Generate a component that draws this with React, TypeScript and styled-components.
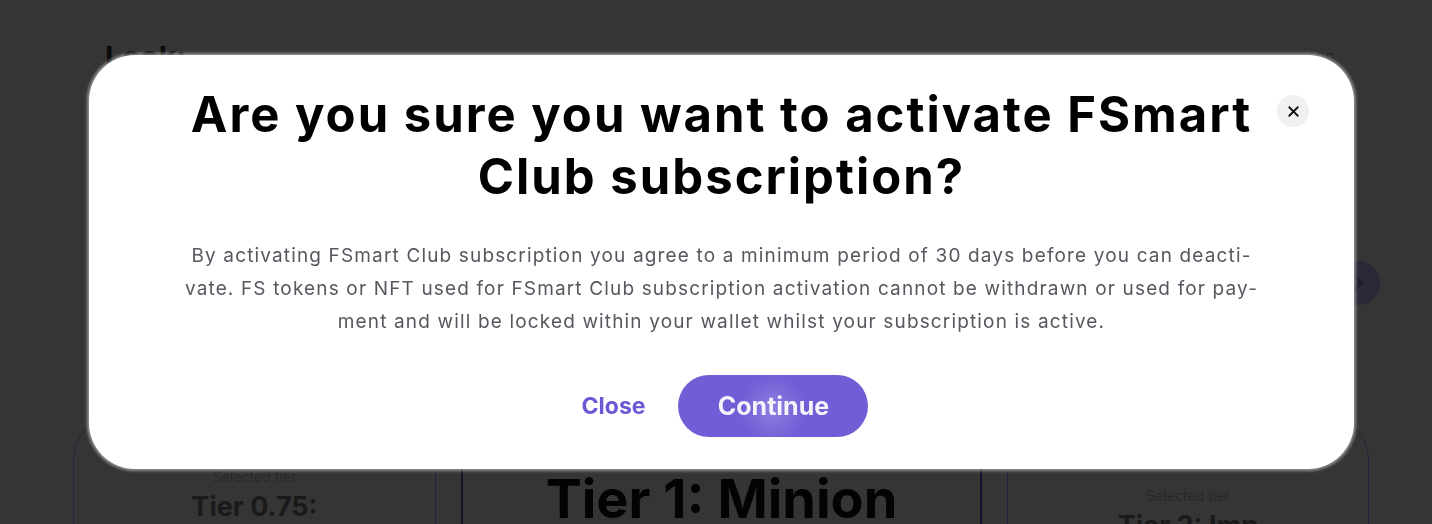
import * as React from 'react';
import styled, { createGlobalStyle } from 'styled-components';
import { X, ChevronRight } from 'lucide-react';

const GlobalStyle = createGlobalStyle`
  html, body {
    margin: 0;
    padding: 0;
    background: #353535;
  }
  body {
    font-family: Inter, 'Noto Sans', sans-serif;
    -webkit-font-smoothing: antialiased;
  }
  * {
    box-sizing: border-box;
  }
`;

// dimmed page behind the modal (colours already taken as they look under the backdrop)
const Page = styled.div`
  width: 1432px;
  height: 524px;
  overflow: hidden;
  background: #353535;
  padding: 0 62px 0 73px;
  display: flex;
  flex-direction: column;
`;

const TopLine = styled.p`
  margin: -21px 0 0;
  height: 22px;
  line-height: 22px;
  font-size: 18px;
  color: #1c1c1c;
  text-align: center;
  white-space: nowrap;
`;

const HeadingRow = styled.div`
  margin-top: 38px;
  height: 36px;
  display: flex;
  justify-content: space-between;
  align-items: flex-start;
  padding-left: 32px;
`;

const Heading = styled.h2`
  margin: 0;
  font-size: 30px;
  line-height: 36px;
  font-weight: 700;
  color: #0c0c0c;
`;

const SideLink = styled.span`
  margin-top: 7px;
  margin-right: 36px;
  font-size: 16px;
  color: #262626;
`;

const ArrowRow = styled.div`
  margin-top: 186px;
  margin-right: -10px;
  display: flex;
  justify-content: flex-end;
`;

const RoundArrow = styled.div`
  width: 44px;
  height: 44px;
  border-radius: 50%;
  background: #2a2838;
  color: #1f1d2b;
  display: flex;
  align-items: center;
  justify-content: center;
`;

const Cards = styled.div`
  margin-top: 110px;
  display: grid;
  grid-template-columns: 363px 521px 362px;
  gap: 25px;
`;

const Card = styled.div<{ $top: number; $selected?: boolean }>`
  height: 220px;
  border-radius: 45px;
  border: ${p => (p.$selected ? '2px solid #15122e' : '1px solid #25233b')};
  padding-top: ${p => p.$top}px;
  display: flex;
  flex-direction: column;
  align-items: center;
`;

const CardLabel = styled.span`
  font-size: 14px;
  line-height: 18px;
  color: #282828;
`;

const CardTitle = styled.span<{ $big?: boolean }>`
  margin-top: 4px;
  font-size: ${p => (p.$big ? '54px' : '27px')};
  line-height: ${p => (p.$big ? '60px' : '34px')};
  font-weight: 700;
  color: ${p => (p.$big ? '#030303' : '#1a1a1a')};
`;

// modal layer
const Overlay = styled.div`
  position: fixed;
  inset: 0;
  display: flex;
  align-items: flex-start;
  padding: 55px 0 0 89px;
`;

const Modal = styled.div`
  position: relative;
  width: 1265px;
  background: #ffffff;
  border-radius: 46px;
  box-shadow: 0 0 3px 2px rgba(255, 255, 255, 0.45);
  padding: 29px 60px 32px;
  display: flex;
  flex-direction: column;
  align-items: center;
`;

const CloseIcon = styled.button`
  position: absolute;
  top: 40px;
  right: 45px;
  width: 32px;
  height: 32px;
  border: none;
  border-radius: 50%;
  background: #f0f0f0;
  color: #111111;
  padding: 0;
  display: flex;
  align-items: center;
  justify-content: center;
`;

const Title = styled.h1`
  margin: 0;
  font-size: 49px;
  line-height: 62px;
  font-weight: 700;
  color: #000000;
  text-align: center;
  letter-spacing: 2px;
`;

const Body = styled.p`
  margin: 31px 0 0;
  font-size: 19px;
  line-height: 33px;
  color: #57575f;
  text-align: center;
  letter-spacing: 1.15px;
  white-space: nowrap;
`;

const Actions = styled.div`
  margin-top: 37px;
  padding-left: 7px;
  display: flex;
  align-items: center;
  gap: 33px;
`;

const TextButton = styled.button`
  border: none;
  background: none;
  padding: 0;
  font-family: inherit;
  font-size: 23px;
  font-weight: 700;
  color: #6c58d4;
`;

const PrimaryButton = styled.button`
  width: 190px;
  height: 62px;
  border: none;
  border-radius: 31px;
  background: radial-gradient(circle at 50% 55%, rgba(255, 255, 255, 0.2) 0, rgba(255, 255, 255, 0) 34px), #715dd6;
  font-family: inherit;
  font-size: 25px;
  font-weight: 700;
  color: #f4f2fb;
`;

export default function App() {
  return (
    <>
      <GlobalStyle />
      <Page>
        <TopLine>Choose the tier that fits your strategy to get more benefits by the day</TopLine>
        <HeadingRow>
          <Heading>Look:</Heading>
          <SideLink>ac</SideLink>
        </HeadingRow>
        <ArrowRow>
          <RoundArrow>
            <ChevronRight size={26} strokeWidth={3} />
          </RoundArrow>
        </ArrowRow>
        <Cards>
          <Card $top={52}>
            <CardLabel>Selected tier</CardLabel>
            <CardTitle>Tier 0.75:</CardTitle>
          </Card>
          <Card $top={30} $selected>
            <CardLabel>Selected tier</CardLabel>
            <CardTitle $big>Tier 1: Minion</CardTitle>
          </Card>
          <Card $top={71}>
            <CardLabel>Selected tier</CardLabel>
            <CardTitle>Tier 2: Imp</CardTitle>
          </Card>
        </Cards>
      </Page>
      <Overlay>
        <Modal>
          <CloseIcon aria-label="Close">
            <X size={17} strokeWidth={2.6} />
          </CloseIcon>
          <Title>
            Are you sure you want to activate FSmart
            <br />
            Club subscription?
          </Title>
          <Body>
            By activating FSmart Club subscription you agree to a minimum period of 30 days before you can deacti-
            <br />
            vate. FS tokens or NFT used for FSmart Club subscription activation cannot be withdrawn or used for pay-
            <br />
            ment and will be locked within your wallet whilst your subscription is active.
          </Body>
          <Actions>
            <TextButton>Close</TextButton>
            <PrimaryButton>Continue</PrimaryButton>
          </Actions>
        </Modal>
      </Overlay>
    </>
  );
}
